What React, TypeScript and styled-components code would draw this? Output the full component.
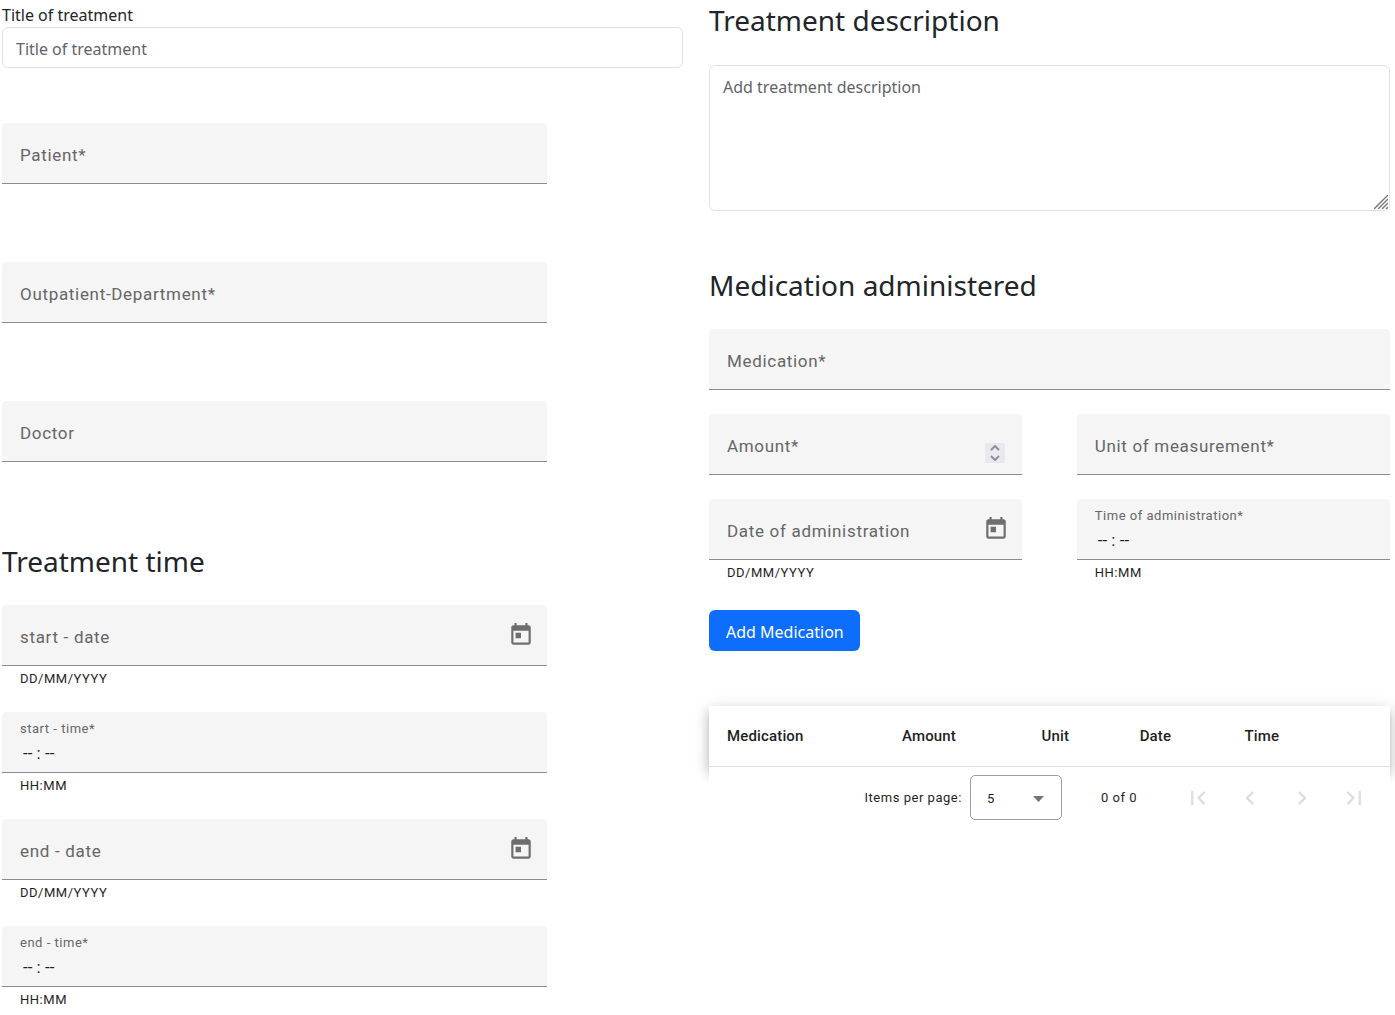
import React, { useId } from "react";
import styled, { createGlobalStyle } from "styled-components";

const sans = `"Segoe UI", "Noto Sans", "Open Sans", sans-serif`;
const roboto = `Roboto, "Liberation Sans", sans-serif`;

const GlobalStyle = createGlobalStyle`
  *, *::before, *::after { box-sizing: border-box; }
  body { margin: 0; background: #fff; color: #212529; font-family: ${sans}; font-size: 16px; line-height: 24px; }
  input, textarea, select, button { font: inherit; color: inherit; margin: 0; }
`;

const Page = styled.form`
  display: grid;
  grid-template-columns: repeat(2, minmax(0, 1fr));
  column-gap: 26px;
  align-items: start;
  padding: 0 5px 4px 2px;
`;

const Column = styled.div`
  display: flex;
  flex-direction: column;
`;

const Title = styled.label`
  padding-top: 3px;
`;

const TextInput = styled.input`
  width: 100%;
  height: 41px;
  padding: 3px 13px 0;
  border: 1px solid #dee2e6;
  border-radius: 6px;
  background: #fff;
  &::placeholder { color: #5f6468; opacity: 1; }
`;

const Heading = styled.h3`
  margin: 0;
  font-size: 28px;
  line-height: 40px;
  font-weight: 400;
`;

const Group = styled.div<{ $gap: number; $top: number; $width?: string }>`
  display: flex;
  flex-direction: column;
  gap: ${(p) => p.$gap}px;
  margin-top: ${(p) => p.$top}px;
  width: ${(p) => p.$width ?? "100%"};
`;

const Pair = styled.div`
  display: grid;
  grid-template-columns: 46% 46%;
  justify-content: space-between;
`;

const TextAreaBox = styled.div`
  position: relative;
  display: flex;
  margin-top: 25px;
`;

const TextArea = styled.textarea`
  width: 100%;
  height: 146px;
  padding: 9px 13px;
  border: 1px solid #dee2e6;
  border-radius: 6px;
  resize: vertical;
  &::placeholder { color: #5f6468; opacity: 1; }
  &::-webkit-resizer { background: transparent; }
`;

const Grip = styled.svg`
  position: absolute;
  right: 2px;
  bottom: 2px;
  pointer-events: none;
`;

const FieldRoot = styled.div`
  font-family: ${roboto};
`;

const FieldBox = styled.div`
  display: grid;
  grid-template-columns: minmax(0, 1fr) auto;
  height: 61px;
  background: #f5f5f5;
  border-bottom: 1px solid #8c8c8c;
  border-radius: 4px 4px 0 0;
`;

const FieldLabel = styled.label<{ $floating?: boolean }>`
  grid-area: 1 / 1;
  align-self: ${(p) => (p.$floating ? "start" : "center")};
  padding: ${(p) => (p.$floating ? "7px 0 0 18px" : "3px 0 0 18px")};
  font-size: ${(p) => (p.$floating ? 13 : 17)}px;
  line-height: 20px;
  letter-spacing: 0.04em;
  color: #666;
  pointer-events: none;
`;

const FieldInput = styled.input`
  grid-area: 1 / 1;
  width: 100%;
  min-width: 0;
  padding: 26px 18px 4px 21px;
  border: 0;
  outline: 0;
  background: transparent;
  font-size: 17px;
  appearance: textfield;
  &::placeholder { color: #1f1f1f; opacity: 1; }
  &::-webkit-inner-spin-button { appearance: none; margin: 0; }
`;

const Hint = styled.div`
  height: 22px;
  padding: 3px 18px 0;
  font-size: 13px;
  line-height: 20px;
  letter-spacing: 0.04em;
  color: #1f1f1f;
`;

const IconButton = styled.button`
  display: grid;
  place-items: center;
  width: 52px;
  height: 60px;
  padding: 0;
  border: 0;
  background: transparent;
  color: #6e6e6e;
  &:disabled { color: #dedede; }
`;

const Spinner = styled.div`
  display: flex;
  flex-direction: column;
  align-self: end;
  width: 20px;
  margin: 0 17px 11px 0;
  background: #e9e8ee;
`;

const SpinButton = styled.button`
  display: grid;
  place-items: center;
  height: 10px;
  padding: 0;
  border: 0;
  background: transparent;
  color: #8f8f9d;
`;

const AddButton = styled.button`
  align-self: flex-start;
  height: 41px;
  margin-top: 28px;
  padding: 3px 16px 0 17px;
  border: 0;
  border-radius: 6px;
  background: #0d6efd;
  color: #fff;
`;

const TableCard = styled.div`
  margin-top: 55px;
  background: #fff;
  box-shadow: 0 5px 5px -3px rgba(0, 0, 0, 0.2), 0 8px 10px 1px rgba(0, 0, 0, 0.14),
    0 3px 14px 2px rgba(0, 0, 0, 0.12);
`;

const Table = styled.table`
  width: 100%;
  table-layout: fixed;
  border-collapse: separate;
  border-spacing: 0;
  font-family: ${roboto};
`;

const HeaderCell = styled.th<{ $width: string }>`
  width: ${(p) => p.$width};
  height: 61px;
  padding: 0 0 0 18px;
  border-bottom: 1px solid #dedede;
  font-size: 15px;
  font-weight: 500;
  letter-spacing: 0.01em;
  text-align: left;
  color: #1f1f1f;
`;

const Paginator = styled.div`
  position: relative;
  display: flex;
  justify-content: flex-end;
  align-items: center;
  height: 61px;
  padding-right: 10px;
  background: #fff;
  font-family: ${roboto};
  font-size: 13px;
  letter-spacing: 0.04em;
  color: #1f1f1f;
`;

const SelectBox = styled.div`
  position: relative;
  width: 92px;
  height: 45px;
  margin-left: 8px;
`;

const Select = styled.select`
  width: 100%;
  height: 100%;
  padding: 2px 16px 0;
  border: 1px solid #9e9e9e;
  border-radius: 5px;
  background: #fff;
  appearance: none;
`;

const Arrow = styled.svg`
  position: absolute;
  right: 18px;
  top: 21px;
  pointer-events: none;
`;

const Range = styled.div`
  margin: 0 35px 0 39px;
`;

function CalendarIcon() {
  return (
    <svg width="26" height="26" viewBox="0 0 24 24" fill="currentColor" aria-hidden="true">
      <path d="M19 3h-1V1h-2v2H8V1H6v2H5c-1.11 0-1.99.9-1.99 2L3 19c0 1.1.89 2 2 2h14c1.1 0 2-.9 2-2V5c0-1.1-.9-2-2-2zm0 16H5V8h14v11zM7 10h5v5H7z" />
    </svg>
  );
}

interface FieldProps {
  label: string;
  hint?: string;
  kind?: "text" | "date" | "time" | "number";
}

function Field({ label, hint, kind = "text" }: FieldProps) {
  const id = useId();
  const isTime = kind === "time";
  return (
    <FieldRoot>
      <FieldBox>
        <FieldInput
          id={id}
          type={kind === "number" ? "number" : "text"}
          placeholder={isTime ? "-- : --" : undefined}
        />
        <FieldLabel htmlFor={id} $floating={isTime}>
          {label}
        </FieldLabel>
        {kind === "date" && (
          <IconButton type="button" aria-label="Open calendar">
            <CalendarIcon />
          </IconButton>
        )}
        {kind === "number" && (
          <Spinner>
            <SpinButton type="button" aria-label="Increase">
              <svg width="10" height="6" viewBox="0 0 10 6" fill="none" stroke="currentColor" strokeWidth="2">
                <path d="M1 5l4-4 4 4" />
              </svg>
            </SpinButton>
            <SpinButton type="button" aria-label="Decrease">
              <svg width="10" height="6" viewBox="0 0 10 6" fill="none" stroke="currentColor" strokeWidth="2">
                <path d="M1 1l4 4 4-4" />
              </svg>
            </SpinButton>
          </Spinner>
        )}
      </FieldBox>
      {hint && <Hint>{hint}</Hint>}
    </FieldRoot>
  );
}

const columns = [
  { name: "Medication", width: "25.7%" },
  { name: "Amount", width: "20.5%" },
  { name: "Unit", width: "14.4%" },
  { name: "Date", width: "15.4%" },
  { name: "Time", width: "24%" },
];

const pageButtons = [
  { name: "First page", path: "M18.41 16.59L13.82 12l4.59-4.59L17 6l-6 6 6 6zM6 6h2v12H6z" },
  { name: "Previous page", path: "M15.41 7.41L14 6l-6 6 6 6 1.41-1.41L10.83 12z" },
  { name: "Next page", path: "M10 6L8.59 7.41 13.17 12l-4.58 4.59L10 18l6-6z" },
  { name: "Last page", path: "M5.59 7.41L10.18 12l-4.59 4.59L7 18l6-6-6-6zM16 6h2v12h-2z" },
];

export default function App() {
  return (
    <>
      <GlobalStyle />
      <Page onSubmit={(e: React.FormEvent) => e.preventDefault()}>
        <Column>
          <Title htmlFor="title">Title of treatment</Title>
          <TextInput id="title" placeholder="Title of treatment" />
          <Group $gap={78} $top={55} $width="80%">
            <Field label="Patient*" />
            <Field label="Outpatient-Department*" />
            <Field label="Doctor" />
          </Group>
          <Group $gap={24} $top={79} $width="80%">
            <Heading>Treatment time</Heading>
            <Field label="start - date" kind="date" hint="DD/MM/YYYY" />
            <Field label="start - time*" kind="time" hint="HH:MM" />
            <Field label="end - date" kind="date" hint="DD/MM/YYYY" />
            <Field label="end - time*" kind="time" hint="HH:MM" />
          </Group>
        </Column>
        <Column>
          <Heading>Treatment description</Heading>
          <TextAreaBox>
            <TextArea aria-label="Treatment description" placeholder="Add treatment description" />
            <Grip width="14" height="14" viewBox="0 0 14 14" stroke="#76767a" strokeWidth="1.4" aria-hidden="true">
              <path d="M0 14L14 0M4 14L14 4M8 14l6-6M12 14l2-2" />
            </Grip>
          </TextAreaBox>
          <Group $gap={24} $top={54}>
            <Heading>Medication administered</Heading>
            <Field label="Medication*" />
            <Pair>
              <Field label="Amount*" kind="number" />
              <Field label="Unit of measurement*" />
            </Pair>
            <Pair>
              <Field label="Date of administration" kind="date" hint="DD/MM/YYYY" />
              <Field label="Time of administration*" kind="time" hint="HH:MM" />
            </Pair>
          </Group>
          <AddButton type="button">Add Medication</AddButton>
          <TableCard>
            <Table>
              <thead>
                <tr>
                  {columns.map((c) => (
                    <HeaderCell key={c.name} $width={c.width} scope="col">
                      {c.name}
                    </HeaderCell>
                  ))}
                </tr>
              </thead>
            </Table>
          </TableCard>
          <Paginator>
            <label htmlFor="page-size">Items per page:</label>
            <SelectBox>
              <Select id="page-size" defaultValue="5">
                <option>5</option>
                <option>10</option>
                <option>20</option>
              </Select>
              <Arrow width="11" height="6" viewBox="0 0 11 6" fill="#757575" aria-hidden="true">
                <path d="M0 0h11L5.5 6z" />
              </Arrow>
            </SelectBox>
            <Range>0 of 0</Range>
            {pageButtons.map((b) => (
              <IconButton key={b.name} type="button" aria-label={b.name} disabled>
                <svg width="28" height="28" viewBox="0 0 24 24" fill="currentColor" aria-hidden="true">
                  <path d={b.path} />
                </svg>
              </IconButton>
            ))}
          </Paginator>
        </Column>
      </Page>
    </>
  );
}
